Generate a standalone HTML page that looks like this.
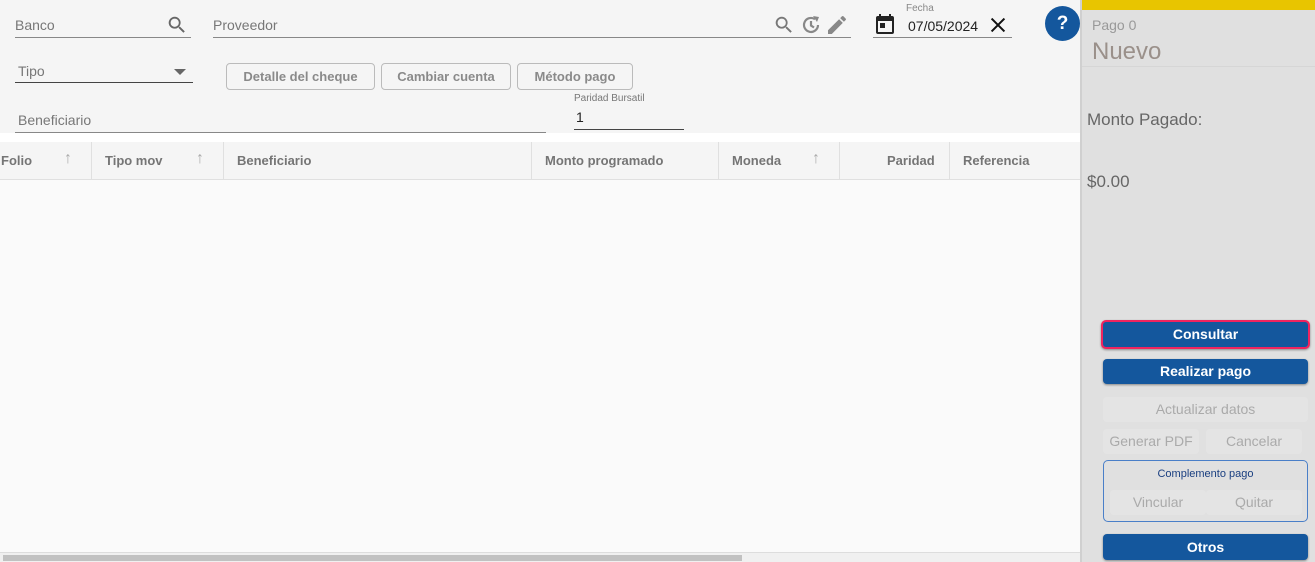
<!DOCTYPE html>
<html><head><meta charset="utf-8"><style>
*{box-sizing:border-box;margin:0;padding:0}
body{width:1315px;height:562px;overflow:hidden;background:#fafafa;font-family:"Liberation Sans",sans-serif;position:relative;color:#757575}
.abs{position:absolute}
.top{left:0;top:0;width:1080px;height:133px;background:#f5f5f5}
.line{position:absolute;height:1px;background:#888}
.lbl{position:absolute;font-size:14px;color:#777}
.btn{position:absolute;top:63px;height:27px;border:1px solid #bbb;border-radius:4px;font-size:13px;font-weight:bold;color:#8a8a8a;text-align:center;line-height:25px;background:#f5f5f5}
.th{position:absolute;top:142px;height:38px;background:#f5f5f5;border-bottom:1px solid #e0e0e0;width:1080px;left:0}
.th span{position:absolute;top:11px;font-size:13px;font-weight:bold;color:#757575}
.sep{position:absolute;top:0;width:1px;height:38px;background:#e0e0e0}
.th span.arr{font-weight:normal;color:#aaa;font-size:16px;top:8px}
.panel{left:1080px;top:0;width:235px;height:562px;background:#e0e0e0;border-left:2px solid #d0d0d0}
.pb{position:absolute;left:21px;width:205px;border-radius:4px;text-align:center;font-size:14px;font-weight:bold}
.blue{background:#14579d;color:#fff;box-shadow:0 1px 2px rgba(0,0,0,.4)}
.dis{background:#e4e4e4;color:#aaa;font-weight:normal}
</style></head><body>
<div class="abs top"></div>
<div class="lbl" style="left:15px;top:17px">Banco</div>
<div class="line" style="left:15px;top:37px;width:176px"></div>
<svg class="abs" style="left:166px;top:14px" width="22" height="22" viewBox="0 0 24 24"><path fill="#666" d="M15.5 14h-.8l-.3-.3A6.5 6.5 0 1 0 9.5 16a6.5 6.5 0 0 0 4.2-1.6l.3.3v.8l5 5 1.5-1.5-5-5zm-6 0A4.5 4.5 0 1 1 14 9.5 4.5 4.5 0 0 1 9.5 14z"/></svg>
<div class="lbl" style="left:213px;top:17px">Proveedor</div>
<div class="line" style="left:213px;top:37px;width:638px"></div>
<svg class="abs" style="left:773px;top:14px" width="22" height="22" viewBox="0 0 24 24"><path fill="#777" d="M15.5 14h-.8l-.3-.3A6.5 6.5 0 1 0 9.5 16a6.5 6.5 0 0 0 4.2-1.6l.3.3v.8l5 5 1.5-1.5-5-5zm-6 0A4.5 4.5 0 1 1 14 9.5 4.5 4.5 0 0 1 9.5 14z"/></svg>
<svg class="abs" style="left:799px;top:13px" width="24" height="24" viewBox="0 0 24 24"><path fill="none" stroke="#888" stroke-width="2.2" d="M19 12a7 7 0 1 1-3-5.8M12 8v4.5l3 2"/><path fill="#888" d="M14 3l6 1-2 5z"/></svg>
<svg class="abs" style="left:825px;top:13px" width="24" height="24" viewBox="0 0 24 24"><path fill="#888" d="M3 17.2V21h3.8L17.8 9.9l-3.7-3.7zM20.7 7a1 1 0 0 0 0-1.4l-2.3-2.3a1 1 0 0 0-1.4 0l-1.8 1.8 3.7 3.7z"/></svg>
<svg class="abs" style="left:873px;top:12px" width="24" height="24" viewBox="0 0 24 24"><path fill="#222" d="M19 4h-1V2h-2v2H8V2H6v2H5a2 2 0 0 0-2 2v14a2 2 0 0 0 2 2h14a2 2 0 0 0 2-2V6a2 2 0 0 0-2-2zm0 16H5V9h14zM7 11h5v5H7z"/></svg>
<div class="abs" style="left:906px;top:3px;font-size:10px;color:#888">Fecha</div>
<div class="abs" style="left:908px;top:18px;font-size:14px;color:#222">07/05/2024</div>
<svg class="abs" style="left:987px;top:14px" width="22" height="22" viewBox="0 0 24 24"><path stroke="#111" stroke-width="2.2" d="M5 5l14 14M19 5L5 19"/></svg>
<div class="line" style="left:873px;top:37px;width:139px"></div>
<div class="abs" style="left:1045px;top:6px;width:35px;height:35px;border-radius:50%;background:#14579d;color:#fff;font-weight:bold;font-size:19px;text-align:center;line-height:35px">?</div>
<div class="lbl" style="left:18px;top:63px">Tipo</div>
<div class="abs" style="left:174px;top:69px;border-left:6px solid transparent;border-right:6px solid transparent;border-top:6px solid #666"></div>
<div class="line" style="left:15px;top:82px;width:178px;background:#444"></div>
<div class="btn" style="left:226px;width:149px">Detalle del cheque</div>
<div class="btn" style="left:381px;width:130px">Cambiar cuenta</div>
<div class="btn" style="left:517px;width:116px">Método pago</div>
<div class="lbl" style="left:18px;top:112px">Beneficiario</div>
<div class="line" style="left:15px;top:132px;width:531px"></div>
<div class="abs" style="left:574px;top:93px;font-size:10px;color:#777">Paridad Bursatil</div>
<div class="abs" style="left:576px;top:109px;font-size:14px;color:#222">1</div>
<div class="line" style="left:574px;top:129px;width:110px;background:#444"></div>
<div class="abs" style="left:0;top:133px;width:1080px;height:9px;background:#fff"></div>
<div class="th">
<span style="left:1px">Folio</span><span class="arr" style="left:64px">↑</span><div class="sep" style="left:91px"></div>
<span style="left:105px">Tipo mov</span><span class="arr" style="left:196px">↑</span><div class="sep" style="left:223px"></div>
<span style="left:237px">Beneficiario</span><div class="sep" style="left:531px"></div>
<span style="left:545px">Monto programado</span><div class="sep" style="left:718px"></div>
<span style="left:732px">Moneda</span><span class="arr" style="left:812px">↑</span><div class="sep" style="left:839px"></div>
<span style="left:887px">Paridad</span><div class="sep" style="left:949px"></div>
<span style="left:963px">Referencia</span>
</div>
<div class="abs" style="left:0;top:552px;width:1080px;height:10px;background:#f0f0f0;border-top:1px solid #ddd"></div>
<div class="abs" style="left:3px;top:555px;width:739px;height:6px;background:#c1c1c1"></div>
<div class="abs panel">
<div class="abs" style="left:0;top:0;width:233px;height:10px;background:#e8c500"></div>
<div class="abs" style="left:10px;top:17px;font-size:14px;color:#999">Pago 0</div>
<div class="abs" style="left:10px;top:38px;font-size:24px;color:#9a908a">Nuevo</div>
<div class="abs" style="left:0;top:66px;width:233px;height:1px;background:#d6d6d6"></div>
<div class="abs" style="left:5px;top:110px;font-size:17px;color:#666">Monto Pagado:</div>
<div class="abs" style="left:5px;top:172px;font-size:17px;color:#666">$0.00</div>
<div class="pb blue" style="top:320px;left:19px;width:209px;height:29px;line-height:25px;border:2px solid #f0245f;border-radius:5px">Consultar</div>
<div class="pb blue" style="top:359px;height:25px;line-height:25px">Realizar pago</div>
<div class="pb dis" style="top:397px;height:25px;line-height:25px">Actualizar datos</div>
<div class="pb dis" style="top:429px;width:96px;height:25px;line-height:25px">Generar PDF</div>
<div class="pb dis" style="top:429px;left:124px;width:96px;height:25px;line-height:25px">Cancelar</div>
<div class="abs" style="left:21px;top:460px;width:205px;height:62px;border:1px solid #4a7fc8;border-radius:5px">
<div style="text-align:center;font-size:11px;color:#1a3f80;margin-top:7px">Complemento pago</div>
</div>
<div class="pb dis" style="top:490px;left:28px;width:96px;height:25px;line-height:25px">Vincular</div>
<div class="pb dis" style="top:490px;left:124px;width:96px;height:25px;line-height:25px">Quitar</div>
<div class="pb blue" style="top:534px;height:26px;line-height:26px">Otros</div>
</div>
</body></html>
